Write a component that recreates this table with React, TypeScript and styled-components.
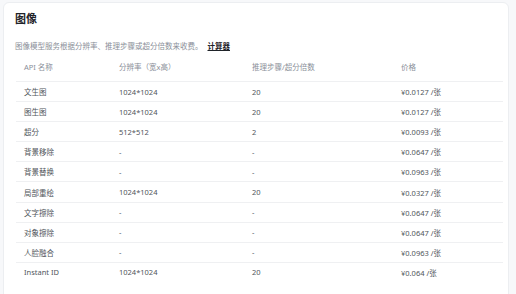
import * as React from 'react';
import styled, { createGlobalStyle } from 'styled-components';

const GlobalStyle = createGlobalStyle`
  html, body {
    margin: 0;
    padding: 0;
    background: #f7f8fa;
    font-family: "Noto Sans", "Noto Sans CJK SC", sans-serif;
  }
`;

const Card = styled.section`
  box-sizing: border-box;
  width: 506px;
  height: 300px;
  margin: 2px 0 0 3px;
  padding: 9px 7px 0 11px;
  background: #fff;
  border: 1px solid #eceef1;
  border-radius: 6px;
`;

const Title = styled.h2`
  margin: 0;
  font-size: 11px;
  line-height: 14px;
  font-weight: 700;
  color: #1f2329;
`;

const Description = styled.p`
  margin: 14px 0 0;
  font-size: 7.5px;
  line-height: 12px;
  color: #8a8f99;
`;

const CalcLink = styled.a`
  margin-left: 5px;
  color: #1f2329;
  font-weight: 700;
  text-decoration: underline;
  cursor: pointer;
`;

const Table = styled.div`
  margin-left: 1px;
  width: 487px;
`;

const Row = styled.div<{ $header?: boolean }>`
  display: grid;
  grid-template-columns: 95px 133px 149px 1fr;
  align-items: center;
  height: ${(p) => (p.$header ? '29px' : '19.1px')};
  border-bottom: 1px solid #eff0f2;
  font-size: 7.5px;
  color: ${(p) => (p.$header ? '#8a8f99' : '#50555b')};

  &:last-child {
    border-bottom: none;
  }
`;

const Cell = styled.div`
  padding-left: 8px;
  white-space: nowrap;
`;

const rows = [
  ['文生图', '1024*1024', '20', '¥0.0127 /张'],
  ['图生图', '1024*1024', '20', '¥0.0127 /张'],
  ['超分', '512*512', '2', '¥0.0093 /张'],
  ['背景移除', '-', '-', '¥0.0647 /张'],
  ['背景替换', '-', '-', '¥0.0963 /张'],
  ['局部重绘', '1024*1024', '20', '¥0.0327 /张'],
  ['文字擦除', '-', '-', '¥0.0647 /张'],
  ['对象擦除', '-', '-', '¥0.0647 /张'],
  ['人脸融合', '-', '-', '¥0.0963 /张'],
  ['Instant ID', '1024*1024', '20', '¥0.064 /张'],
];

const App: React.FunctionComponent = () => (
  <>
    <GlobalStyle />
    <Card>
      <Title>图像</Title>
      <Description>
        图像模型服务根据分辨率、推理步骤或超分倍数来收费。
        <CalcLink>计算器</CalcLink>
      </Description>
      <Table>
        <Row $header>
          <Cell>API 名称</Cell>
          <Cell>分辨率（宽x高）</Cell>
          <Cell>推理步骤/超分倍数</Cell>
          <Cell>价格</Cell>
        </Row>
        {rows.map((r) => (
          <Row key={r[0]}>
            {r.map((c, i) => (
              <Cell key={i}>{c}</Cell>
            ))}
          </Row>
        ))}
      </Table>
    </Card>
  </>
);

export default App;
